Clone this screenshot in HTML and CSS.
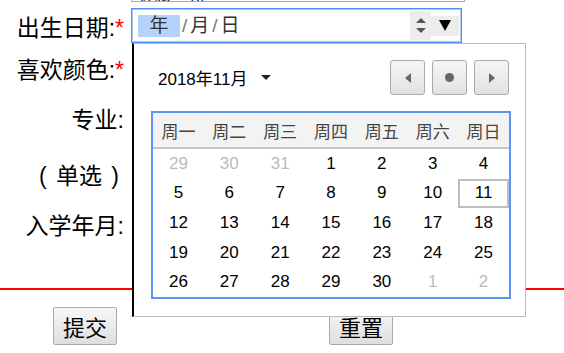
FILE: index.html
```html
<!DOCTYPE html>
<html lang="zh-CN">
<head>
    <meta charset="UTF-8">
    <meta name="viewport" content="width=device-width, initial-scale=1.0">
    <title>学生信息登记</title>
    <link rel="stylesheet" href="styles.css">
</head>
<body>
    <form class="form">
        <div class="row row-top">
            <div class="label">班级名称:</div>
            <div class="field"><div class="text-input">计科一班</div></div>
        </div>

        <div class="row row-date">
            <div class="label">出生日期:<span class="req">*</span></div>
            <div class="field date-field">
                <div class="date-input">
                    <span class="seg seg-active">年</span><span class="sep">/</span><span class="seg">月</span><span class="sep">/</span><span class="seg">日</span>
                    <span class="spin"><i class="up"></i><i class="down"></i></span>
                    <span class="drop"><i></i></span>
                </div>

                <!-- 日期选择弹出层 -->
                <div class="picker">
                    <div class="picker-head">
                        <div class="month">2018年11月<i class="caret"></i></div>
                        <div class="nav">
                            <button type="button" class="nav-btn"><i class="tri-left"></i></button>
                            <button type="button" class="nav-btn"><i class="dot"></i></button>
                            <button type="button" class="nav-btn"><i class="tri-right"></i></button>
                        </div>
                    </div>
                    <div class="cal">
                        <div class="week">
                            <span>周一</span><span>周二</span><span>周三</span><span>周四</span><span>周五</span><span>周六</span><span>周日</span>
                        </div>
                        <div class="days">
                            <span class="other">29</span><span class="other">30</span><span class="other">31</span><span>1</span><span>2</span><span>3</span><span>4</span>
                            <span>5</span><span>6</span><span>7</span><span>8</span><span>9</span><span>10</span><span class="today">11</span>
                            <span>12</span><span>13</span><span>14</span><span>15</span><span>16</span><span>17</span><span>18</span>
                            <span>19</span><span>20</span><span>21</span><span>22</span><span>23</span><span>24</span><span>25</span>
                            <span>26</span><span>27</span><span>28</span><span>29</span><span>30</span><span class="other">1</span><span class="other">2</span>
                        </div>
                    </div>
                </div>
            </div>
        </div>

        <div class="row row-color">
            <div class="label">喜欢颜色:<span class="req">*</span></div>
        </div>
        <div class="row row-major">
            <div class="label">专业:</div>
        </div>
        <div class="row row-single">
            <div class="label">( 单选 )</div>
        </div>
        <div class="row row-month">
            <div class="label">入学年月:</div>
        </div>

        <div class="rule"></div>

        <div class="buttons">
            <button type="submit" class="btn btn-submit">提交</button>
            <button type="reset" class="btn btn-reset">重置</button>
        </div>
    </form>
</body>
</html>
```

FILE: styles.css
```css
body {
    margin: 0;
    font-family: "Liberation Sans", "Noto Sans CJK SC", sans-serif;
    color: #000;
    background: #fff;
    overflow: hidden;
}
.form {
    margin-top: -40px;
}
.row {
    display: flex;
    align-items: center;
}
.label {
    width: 124px;
    flex: none;
    text-align: right;
    font-size: 23px;
    line-height: 26px;
    white-space: nowrap;
}
.req {
    color: #f00;
}
.field {
    margin-left: 7px;
}
.row-top {
    height: 42px;
    align-items: flex-end;
}
.row-top .label {
    margin-bottom: 2px;
}
.text-input {
    width: 326px;
    height: 28px;
    border: 1px solid #aaa;
    border-top: none;
    font-size: 17px;
    line-height: 50px;
    padding-left: 6px;
    overflow: hidden;
}
.row-date {
    margin-top: 6px;
    height: 35px;
}
.row-date .label {
    margin-top: 5px;
}
.date-field {
    position: relative;
}
.date-input {
    box-sizing: border-box;
    width: 331px;
    height: 35px;
    border: 1px solid #4d90fe;
    box-shadow: inset 0 0 0 1px #a9c8f8;
    display: flex;
    align-items: center;
    padding-left: 6px;
    font-size: 19px;
    color: #333;
}
.seg {
    height: 22px;
    line-height: 22px;
    padding: 0 3px;
}
.seg-active {
    background: #b4d3fa;
    width: 42px;
    text-align: center;
    padding: 0;
    margin-right: 2px;
}
.sep {
    color: #777;
}
.spin {
    margin-left: auto;
    width: 21px;
    height: 29px;
    background: #ececec;
    display: flex;
    flex-direction: column;
    align-items: center;
    justify-content: center;
    gap: 5px;
}
.spin .up {
    border: 5px solid transparent;
    border-top: none;
    border-bottom: 5px solid #555;
}
.spin .down {
    border: 5px solid transparent;
    border-bottom: none;
    border-top: 5px solid #555;
}
.drop {
    width: 28px;
    height: 20px;
    margin-right: 2px;
    background: #ececec;
    display: flex;
    align-items: center;
    justify-content: center;
}
.drop i {
    border: 6px solid transparent;
    border-bottom: none;
    border-top: 11px solid #000;
}

/* 弹出日历 */
.picker {
    position: absolute;
    left: 1px;
    top: 35px;
    width: 394px;
    height: 274px;
    box-sizing: border-box;
    background: #fff;
    border: 1px solid #bdbdbd;
    border-left: 2px solid #000;
    padding: 16px 15px 18px 17px;
    z-index: 2;
}
.picker-head {
    height: 35px;
    display: flex;
    align-items: center;
    justify-content: space-between;
    margin-bottom: 16px;
}
.month {
    margin-left: 7px;
    font-size: 17px;
    display: flex;
    align-items: center;
}
.caret {
    margin-left: 14px;
    border: 5px solid transparent;
    border-bottom: none;
    border-top: 5px solid #222;
}
.nav {
    display: flex;
    gap: 7px;
    margin-right: 1px;
}
.nav-btn {
    width: 35px;
    height: 35px;
    padding: 0;
    border: 1px solid #aaa;
    border-radius: 3px;
    background: linear-gradient(#f5f5f5, #e2e2e2);
    display: flex;
    align-items: center;
    justify-content: center;
}
.tri-left {
    border: 5px solid transparent;
    border-left: none;
    border-right: 6px solid #666;
}
.tri-right {
    border: 5px solid transparent;
    border-right: none;
    border-left: 6px solid #666;
}
.dot {
    width: 9px;
    height: 9px;
    border-radius: 50%;
    background: #666;
}
.cal {
    border: 2px solid #5b95f2;
    width: 360px;
    box-sizing: border-box;
}
.week {
    display: grid;
    grid-template-columns: repeat(7, 1fr);
    height: 34px;
    background: #f3f3f3;
    border-bottom: 2px solid #c6c6c6;
    align-items: center;
    text-align: center;
    font-size: 17px;
    color: #444;
}
.days {
    display: grid;
    grid-template-columns: repeat(7, 1fr);
    grid-auto-rows: 29.6px;
    text-align: center;
    font-size: 17px;
}
.days span {
    display: flex;
    align-items: center;
    justify-content: center;
}
.days .other {
    color: #bbb;
}
.days .today {
    box-shadow: inset 0 0 0 2px #bdbdbd;
}

.row-color {
    height: 54px;
}
.row-major {
    height: 46px;
}
.row-single {
    height: 66px;
}
.row-single .label {
    padding-right: 5px;
    word-spacing: 3px;
    box-sizing: border-box;
}
.row-month {
    height: 30px;
}
.row-month .label {
    margin-top: 3px;
}
.rule {
    margin-top: 49px;
    border-top: 2px solid #f00;
}
.buttons {
    display: flex;
    margin-top: 17px;
    padding-left: 53px;
}
.btn {
    height: 38px;
    width: 64px;
    font-family: "Noto Sans CJK SC", sans-serif;
    font-size: 22px;
    line-height: 1;
    border: 1px solid #aaa;
    border-radius: 2px;
    background: linear-gradient(#f8f8f8, #dedede);
    padding: 0;
}
.btn-reset {
    margin-left: 212px;
}
```
